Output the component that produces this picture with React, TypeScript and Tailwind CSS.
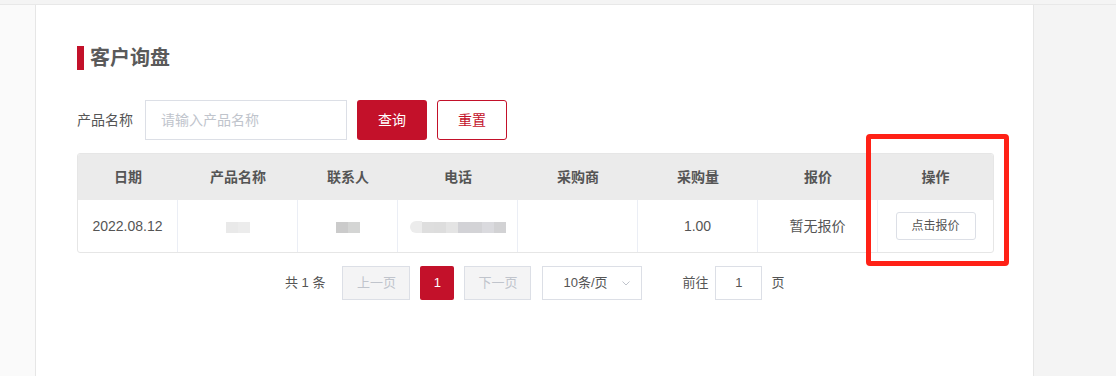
import React from 'react';

const columns = [
    { label: "日期", w: "w-[100px]" },
    { label: "产品名称", w: "w-[120px]" },
    { label: "联系人", w: "w-[100px]" },
    { label: "电话", w: "w-[120px]" },
    { label: "采购商", w: "w-[120px]" },
    { label: "采购量", w: "w-[120px]" },
    { label: "报价", w: "w-[120px]" },
    { label: "操作", w: "flex-1" },
];

// masked cells: rows of little grey squares, like a mosaic
const Mosaic: React.FC<{ cells: string[]; className?: string }> = ({ cells, className = "" }) => (
    <div className={`flex flex-row ${className}`}>
        {cells.map((c, i) => (
            <div key={i} className={`w-[12px] h-[11px] ${c}`}></div>
        ))}
    </div>
);

const App = () => {
    return (
        <div
            className="w-[1116px] h-[376px] bg-[#f4f4f4] flex flex-col overflow-hidden"
            style={{ fontFamily: '"Liberation Sans", "Noto Sans CJK SC", sans-serif' }}
        >
            <div className="h-[5px] border-b border-[#e8e8e8] shrink-0"></div>
            <div className="flex flex-row flex-1">
                <div className="w-[36px] bg-[#fafafa] border-r border-[#e6e6e6]"></div>
                <div className="w-[998px] bg-white border-r border-[#e6e6e6] relative">
                    <div className="flex flex-row items-center mt-[41px] ml-[41px] h-[24px]">
                        <div className="w-[7px] h-[24px] bg-[#c3112a]"></div>
                        <div className="ml-[6px] text-[20px] font-bold text-[#5a5a5a] leading-none">客户询盘</div>
                    </div>

                    <div className="flex flex-row items-center mt-[30px] ml-[41px] h-[40px]">
                        <div className="text-[14px] text-[#555]">产品名称</div>
                        <div className="ml-[12px] w-[202px] h-[40px] border border-[#dcdfe6] flex items-center px-[15px] text-[14px] text-[#c0c4cc]">
                            请输入产品名称
                        </div>
                        <button className="ml-[10px] w-[70px] h-[40px] rounded-[3px] bg-[#c3112a] text-white text-[14px]">查询</button>
                        <button className="ml-[10px] w-[70px] h-[40px] rounded-[3px] border border-[#c3112a] text-[#c3112a] text-[14px] bg-white">重置</button>
                    </div>

                    <div className="mt-[13px] ml-[41px] w-[917px] border border-[#e6e6e6] rounded-[3px] overflow-hidden">
                        <div className="flex flex-row h-[46px] bg-[#ebebeb]">
                            {columns.map((c) => (
                                <div key={c.label} className={`${c.w} flex items-center justify-center text-[14px] font-bold text-[#555]`}>
                                    {c.label}
                                </div>
                            ))}
                        </div>
                        <div className="flex flex-row h-[52px] text-[14px] text-[#555]">
                            <div className="w-[100px] flex items-center justify-center border-r border-[#ebeef5]">2022.08.12</div>
                            <div className="w-[120px] flex items-center justify-center border-r border-[#ebeef5]">
                                <Mosaic cells={["bg-[#e9e9e9]", "bg-[#ececec]"]} className="mt-[2px]" />
                            </div>
                            <div className="w-[100px] flex items-center justify-center border-r border-[#ebeef5]">
                                <Mosaic cells={["bg-[#cbcbcb]", "bg-[#d4d5d4]"]} className="mt-[2px]" />
                            </div>
                            <div className="w-[120px] flex items-center justify-center border-r border-[#ebeef5]">
                                <div className="flex flex-row items-end mt-[2px]">
                                    <div className="w-[12px] h-[12px] rounded-l-full bg-[#ececec]"></div>
                                    <Mosaic cells={["bg-[#dedede]", "bg-[#dddddd]", "bg-[#e4e4e4]", "bg-[#d2d2d6]", "bg-[#d3d3d6]", "bg-[#dadade]", "bg-[#d2d2d4]"]} />
                                </div>
                            </div>
                            <div className="w-[120px] border-r border-[#ebeef5]"></div>
                            <div className="w-[120px] flex items-center justify-center border-r border-[#ebeef5]">1.00</div>
                            <div className="w-[120px] flex items-center justify-center border-r border-[#ebeef5]">暂无报价</div>
                            <div className="flex-1 flex items-center justify-center">
                                <button className="w-[80px] h-[28px] border border-[#dcdfe6] rounded-[3px] text-[12px] text-[#555] bg-white">点击报价</button>
                            </div>
                        </div>
                    </div>

                    <div className="flex flex-row items-center mt-[13px] ml-[249px] h-[34px] text-[13px] text-[#555]">
                        <div className="mr-[17px]">共 1 条</div>
                        <div className="w-[68px] h-[34px] bg-[#f4f4f5] border border-[#dcdfe6] flex items-center justify-center text-[#c0c4cc]">上一页</div>
                        <div className="ml-[10px] w-[34px] h-[34px] bg-[#c3112a] rounded-[2px] flex items-center justify-center text-white">1</div>
                        <div className="ml-[10px] w-[67px] h-[34px] bg-[#f4f4f5] border border-[#dcdfe6] flex items-center justify-center text-[#c0c4cc]">下一页</div>
                        <div className="ml-[11px] w-[100px] h-[34px] border border-[#dcdfe6] flex items-center justify-between pl-[20px] pr-[10px]">
                            <span>10条/页</span>
                            <svg width="10" height="10" viewBox="0 0 10 10" fill="none" stroke="#c0c4cc" strokeWidth="1">
                                <path d="M1.5 3.5 L5 7 L8.5 3.5" />
                            </svg>
                        </div>
                        <div className="ml-[40px]">前往</div>
                        <div className="ml-[7px] w-[47px] h-[34px] border border-[#dcdfe6] flex items-center justify-center">1</div>
                        <div className="ml-[9px]">页</div>
                    </div>

                    <div className="absolute left-[830px] top-[129px] w-[143px] h-[132px] border-[5px] border-[#ff2116] rounded-[4px]"></div>
                </div>
            </div>
        </div>
    );
};

export default App;
